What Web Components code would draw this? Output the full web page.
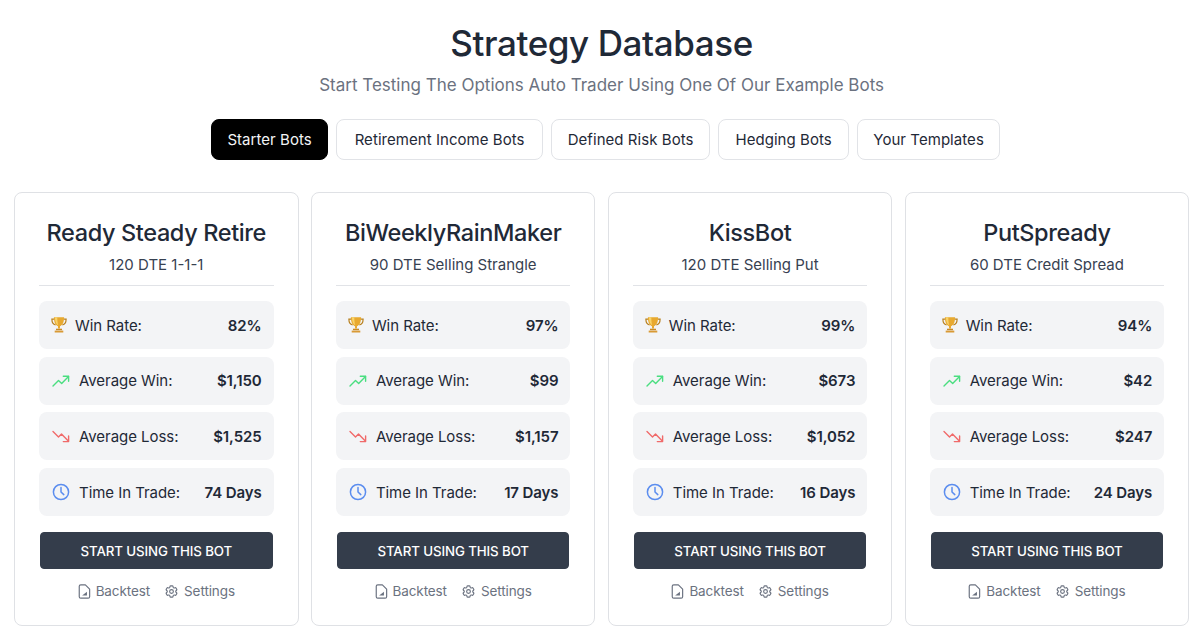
<!DOCTYPE html>
<html lang="en">
<head>
<meta charset="utf-8">
<title>Strategy Database</title>
<style>
  html, body { margin: 0; background: #fff; }
  body { font-family: "Inter", "Liberation Sans", sans-serif; color: #1f2937; overflow: hidden; }
</style>
</head>
<body>
<strategy-page></strategy-page>

<script>
const ICONS = {
  trophy: `<svg width="16" height="18" viewBox="1 0 16 18">
    <path d="M4.500 3.200H1.900c0 3 1 5 3.700 5.600M13.500 3.200h2.600c0 3-1 5-3.700 5.600" fill="none" stroke="#b8801f" stroke-width="1.200"/>
    <path d="M3.900 1.300h10.200c0 4.800-1.500 8-4.100 8.900v2.400H8v-2.400C5.400 9.300 3.900 6.100 3.900 1.300z" fill="#e8a92f"/>
    <path d="M4.900 1.300h2.400c0 3.500.3 6 1 8-2.200-.9-3.300-3.900-3.400-8z" fill="#f8d36a"/>
    <path d="M6 12.700h6v1.500H6z" fill="#c98a25"/><path d="M4.700 14.600h8.600v1.900H4.700z" fill="#d99a35"/>
  </svg>`,
  up: `<svg width="18" height="18" viewBox="0 0 18 18" fill="none" stroke="#4ade80" stroke-width="1.400" stroke-linecap="round" stroke-linejoin="round">
    <path d="M1 14l5.500-5.500 3.200 3L16.500 4.500"/><path d="M11.300 4.200h5.300v5"/>
  </svg>`,
  down: `<svg width="18" height="18" viewBox="0 0 18 18" fill="none" stroke="#f06a6a" stroke-width="1.400" stroke-linecap="round" stroke-linejoin="round">
    <path d="M1 4.500l5.500 5.500 3-3 6.800 7"/><path d="M16.600 9v5.600h-5.300"/>
  </svg>`,
  clock: `<svg width="18" height="18" viewBox="0 0 18 18" fill="none" stroke="#5b8def" stroke-width="1.500" stroke-linecap="round" stroke-linejoin="round">
    <circle cx="9" cy="9" r="7.600"/><path d="M9 4.600V9l2.800 2.600"/>
  </svg>`,
  report: `<svg width="13" height="15" viewBox="1 0 12 14" fill="none" stroke="#6b7280" stroke-width="1.100" stroke-linejoin="round">
    <path d="M3.500.8h4.300L11.800 4.800v7a1.400 1.400 0 0 1-1.400 1.400H3.500a1.400 1.400 0 0 1-1.400-1.400V2.200A1.400 1.400 0 0 1 3.500.8z"/>
    <path d="M4.800 10.800h4.500V7.200z" fill="#6b7280" stroke="none"/>
  </svg>`,
  gear: `<svg width="15" height="15" viewBox="0 0 24 24" fill="none" stroke="#6b7280" stroke-width="1.800" stroke-linecap="round" stroke-linejoin="round">
    <path d="M9.594 3.940c.09-.542.56-.94 1.110-.94h2.593c.55 0 1.020.398 1.110.94l.213 1.281c.063.374.313.686.645.87.074.04.147.083.22.127.325.196.72.257 1.075.124l1.217-.456a1.125 1.125 0 0 1 1.370.49l1.296 2.247a1.125 1.125 0 0 1-.26 1.431l-1.003.827c-.293.241-.438.613-.43.992a7.723 7.723 0 0 1 0 .255c-.008.378.137.75.43.991l1.004.827c.424.35.534.955.26 1.43l-1.298 2.247a1.125 1.125 0 0 1-1.369.491l-1.217-.456c-.355-.133-.75-.072-1.076.124a6.470 6.470 0 0 1-.22.128c-.331.183-.581.495-.644.869l-.213 1.281c-.09.543-.56.94-1.110.94h-2.594c-.55 0-1.019-.398-1.110-.94l-.213-1.281c-.062-.374-.312-.686-.644-.87a6.520 6.520 0 0 1-.22-.127c-.325-.196-.72-.257-1.076-.124l-1.217.456a1.125 1.125 0 0 1-1.369-.49l-1.297-2.247a1.125 1.125 0 0 1 .26-1.431l1.004-.827c.292-.24.437-.613.43-.991a6.932 6.932 0 0 1 0-.255c.007-.38-.138-.751-.43-.992l-1.004-.827a1.125 1.125 0 0 1-.26-1.430l1.297-2.247a1.125 1.125 0 0 1 1.370-.491l1.216.456c.356.133.751.072 1.076-.124.072-.044.146-.086.22-.128.332-.183.582-.495.644-.869l.214-1.280z"/>
    <circle cx="12" cy="12" r="3"/>
  </svg>`
};

class StrategyTab extends HTMLElement {
  connectedCallback() {
    this.attachShadow({ mode: 'open' });
    this.shadowRoot.innerHTML = `
      <style>
        :host {
          display: flex;
          align-items: center;
          justify-content: center;
          width: ${this.getAttribute('w')}px;
          height: 41px;
          box-sizing: border-box;
          border: 1px solid #e1e3e7;
          border-radius: 8px;
          font-size: 15px;
          letter-spacing: 0.05px;
          color: #1f2937;
          background: #fff;
          white-space: nowrap;
        }
        :host([active]) { background: #000; border-color: #000; color: #f3f4f6; }
      </style>
      <slot></slot>`;
  }
}

class StatRow extends HTMLElement {
  connectedCallback() {
    var name = this.getAttribute('icon');
    this.attachShadow({ mode: 'open' });
    this.shadowRoot.innerHTML = `
      <style>
        :host {
          display: flex;
          align-items: center;
          height: 48px;
          box-sizing: border-box;
          padding: 0 12px;
          background: #f3f4f6;
          border-radius: 8px;
          font-size: 15px;
          color: #1f2937;
        }
        svg { display: block; flex: none; margin-left: ${name === 'trophy' ? '0' : '1px'}; }
        .label { margin-left: ${name === 'trophy' ? '8px' : '9px'}; flex: 1; letter-spacing: -0.05px; }
        .value { font-weight: 600; letter-spacing: -0.1px; }
      </style>
      ${ICONS[name] || ''}
      <span class="label"><slot name="label"></slot></span>
      <span class="value"><slot name="value"></slot></span>`;
  }
}

class BotCard extends HTMLElement {
  connectedCallback() {
    var stats = JSON.parse(this.getAttribute('stats'));
    this.attachShadow({ mode: 'open' });
    this.shadowRoot.innerHTML = `
      <style>
        :host {
          display: block;
          box-sizing: border-box;
          height: 434px;
          padding: 23px 24px 0;
          border: 1px solid #dfe1e5;
          border-radius: 8px;
          background: #fff;
          min-width: 0;
        }
        h2 {
          margin: 0;
          font-size: 23.5px;
          line-height: 34px;
          font-weight: 500;
          letter-spacing: -0.38px;
          text-align: center;
          color: #1f2937;
        }
        .sub {
          margin-top: 3px;
          font-size: 15px;
          line-height: 24px;
          text-align: center;
          color: #374151;
        }
        hr { margin: 8px 0 15px; border: 0; border-top: 1px solid #e1e3e7; }
        .stats { display: flex; flex-direction: column; gap: 7.7px; }
        button {
          display: block;
          width: calc(100% - 2px);
          height: 37px;
          margin: 16px 1px 0;
          border: 1px solid #343d4b;
          border-radius: 4px;
          background: #343d4b;
          color: #fff;
          font: 500 13.3px "Inter", "Liberation Sans", sans-serif;
          letter-spacing: -0.1px;
        }
        .links {
          display: flex;
          justify-content: center;
          gap: 14px;
          margin-top: 14px;
          font-size: 13.5px;
          letter-spacing: -0.1px;
          color: #6b7280;
        }
        .links span { display: flex; align-items: center; gap: 5px; }
      </style>
      <h2>${this.getAttribute('name')}</h2>
      <div class="sub">${this.getAttribute('sub')}</div>
      <hr>
      <div class="stats">
        <stat-row icon="trophy"><span slot="label">Win Rate:</span><span slot="value">${stats[0]}</span></stat-row>
        <stat-row icon="up"><span slot="label">Average Win:</span><span slot="value">${stats[1]}</span></stat-row>
        <stat-row icon="down"><span slot="label">Average Loss:</span><span slot="value">${stats[2]}</span></stat-row>
        <stat-row icon="clock"><span slot="label">Time In Trade:</span><span slot="value">${stats[3]}</span></stat-row>
      </div>
      <button>START USING THIS BOT</button>
      <div class="links">
        <span>${ICONS.report}Backtest</span>
        <span>${ICONS.gear}Settings</span>
      </div>`;
  }
}

class StrategyPage extends HTMLElement {
  connectedCallback() {
    this.attachShadow({ mode: 'open' });
    var bots = [
      ['Ready Steady Retire', '120 DTE 1-1-1', ['82%', '$1,150', '$1,525', '74 Days']],
      ['BiWeeklyRainMaker', '90 DTE Selling Strangle', ['97%', '$99', '$1,157', '17 Days']],
      ['KissBot', '120 DTE Selling Put', ['99%', '$673', '$1,052', '16 Days']],
      ['PutSpready', '60 DTE Credit Spread', ['94%', '$42', '$247', '24 Days']]
    ];
    var tabs = [['Starter Bots', 117], ['Retirement Income Bots', 207], ['Defined Risk Bots', 159], ['Hedging Bots', 131], ['Your Templates', 143]];
    this.shadowRoot.innerHTML = `
      <style>
        :host { display: block; padding: 0 10.8px 0 14px; }
        header { text-align: center; padding-top: 20px; }
        h1 {
          margin: 0;
          font-size: 35px;
          line-height: 46px;
          font-weight: 500;
          letter-spacing: -0.4px;
          color: #1f2937;
        }
        p {
          margin: 6px 0 0;
          font-size: 17px;
          line-height: 26px;
          color: #6b7280;
        }
        nav { display: flex; justify-content: center; gap: 8px; margin-top: 21px; padding-left: 8px; }
        .cards { display: grid; grid-template-columns: repeat(4, 1fr); gap: 12.3px; margin-top: 32px; }
      </style>
      <header>
        <h1>Strategy Database</h1>
        <p>Start Testing The Options Auto Trader Using One Of Our Example Bots</p>
      </header>
      <nav>
        ${tabs.map((t, i) => `<strategy-tab w="${t[1]}" ${i === 0 ? 'active' : ''}>${t[0]}</strategy-tab>`).join('')}
      </nav>
      <div class="cards"></div>`;
    var cards = this.shadowRoot.querySelector('.cards');
    bots.forEach(function (b) {
      var el = document.createElement('bot-card');
      el.setAttribute('name', b[0]);
      el.setAttribute('sub', b[1]);
      el.setAttribute('stats', JSON.stringify(b[2]));
      cards.appendChild(el);
    });
  }
}

customElements.define('strategy-tab', StrategyTab);
customElements.define('stat-row', StatRow);
customElements.define('bot-card', BotCard);
customElements.define('strategy-page', StrategyPage);
</script>
</body>
</html>
